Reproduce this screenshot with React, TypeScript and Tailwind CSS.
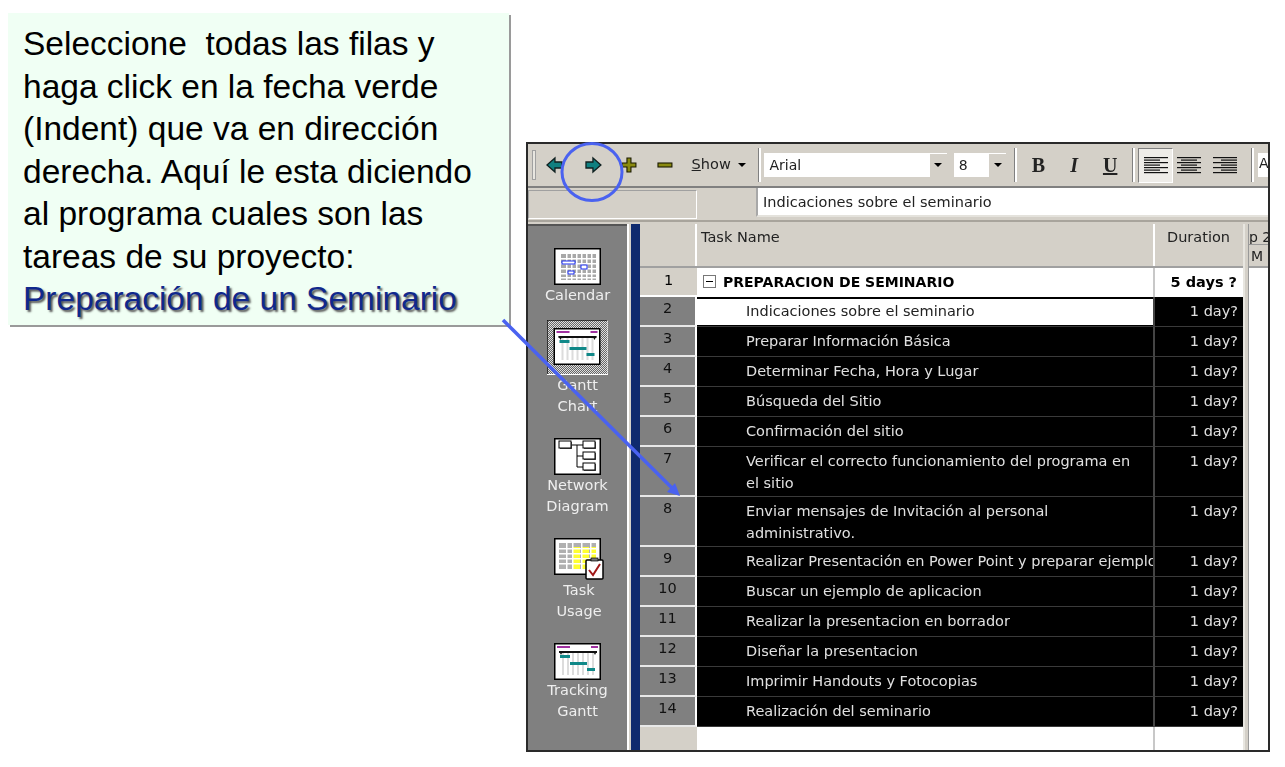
import React from 'react';

const ui = "font-['DejaVu_Sans',sans-serif]";

const rows = [
  { n: 2, h: 'h-[30px]', text: 'Indicaciones sobre el seminario', active: true },
  { n: 3, h: 'h-[30px]', text: 'Preparar Información Básica' },
  { n: 4, h: 'h-[30px]', text: 'Determinar Fecha, Hora y Lugar' },
  { n: 5, h: 'h-[30px]', text: 'Búsqueda del Sitio' },
  { n: 6, h: 'h-[30px]', text: 'Confirmación del sitio' },
  { n: 7, h: 'h-[50px]', text: 'Verificar el correcto funcionamiento del programa en el sitio' },
  { n: 8, h: 'h-[50px]', text: 'Enviar mensajes de Invitación al personal administrativo.' },
  { n: 9, h: 'h-[30px]', text: 'Realizar Presentación en Power Point y preparar ejemplo', clip: true },
  { n: 10, h: 'h-[30px]', text: 'Buscar un ejemplo de aplicacion' },
  { n: 11, h: 'h-[30px]', text: 'Realizar la presentacion en borrador' },
  { n: 12, h: 'h-[30px]', text: 'Diseñar la presentacion' },
  { n: 13, h: 'h-[30px]', text: 'Imprimir Handouts y Fotocopias' },
  { n: 14, h: 'h-[30px]', text: 'Realización del seminario' },
];

const Arrow = ({ flip, className }: { flip?: boolean; className: string }) => (
  <svg width="20" height="20" viewBox="0 0 20 20" className={className}>
    <path
      d={flip ? 'M2 10 L10 3 V7 H17 V13 H10 V17 Z' : 'M18 10 L10 3 V7 H3 V13 H10 V17 Z'}
      fill="#0f8080"
      stroke="#102020"
      strokeWidth="1.3"
    />
  </svg>
);

const Plus = ({ className }: { className: string }) => (
  <svg width="20" height="20" viewBox="0 0 20 20" className={className}>
    <path d="M8 3 H12 V8 H17 V12 H12 V17 H8 V12 H3 V8 H8 Z" fill="#8a8a10" stroke="#1a1a00" strokeWidth="1.1" />
  </svg>
);

const Minus = ({ className }: { className: string }) => (
  <svg width="20" height="20" viewBox="0 0 20 20" className={className}>
    <rect x="3" y="8" width="14" height="4" fill="#8a8a10" stroke="#1a1a00" strokeWidth="1.1" />
  </svg>
);

const Sep = ({ className }: { className: string }) => (
  <div className={`w-[3px] h-[34px] border-l border-l-[#808080] border-r-2 border-r-white ${className}`} />
);

const Combo = ({ w, label }: { w: string; label: string }) => (
  <div className={`${w} h-[24px] bg-white flex items-center justify-between text-[14px] text-[#222]`}>
    <span className="pl-[5px]">{label}</span>
    <div className="w-[17px] h-[23px] bg-[#d4d0c8] flex items-center justify-center">
      <div className="w-0 h-0 border-x-[4px] border-x-transparent border-t-[4px] border-t-black" />
    </div>
  </div>
);

const AlignIcon = ({ mode }: { mode: 'left' | 'center' | 'right' }) => {
  const lines = [24, 16, 24, 16, 24, 16, 24];
  return (
    <svg width="24" height="20" viewBox="0 0 24 20">
      {lines.map((w, i) => {
        const x = mode === 'left' ? 0 : mode === 'right' ? 24 - w : (24 - w) / 2;
        return <rect key={i} x={x} y={2 + i * 2.5} width={w} height="1.2" fill="#111" />;
      })}
    </svg>
  );
};

const CalendarIcon = () => (
  <svg width="47" height="37" viewBox="0 0 47 37">
    <rect x="0.75" y="0.75" width="45.5" height="35.5" fill="#fff" stroke="#000" strokeWidth="1.5" />
    <rect x="7" y="6" width="35" height="26" fill="#a8a8a8" />
    {[12, 17, 22, 27, 32, 37].map((x) => (
      <rect key={x} x={x} y="6" width="1.5" height="26" fill="#fff" />
    ))}
    {[10, 15, 20, 25, 29].map((y) => (
      <rect key={y} x="7" y={y} width="35" height="1.5" fill="#fff" />
    ))}
    <rect x="8" y="13" width="13" height="3" fill="#fff" stroke="#1a2cf0" />
    <rect x="27" y="17" width="6" height="4" fill="#fff" stroke="#1a2cf0" />
    <rect x="14" y="23" width="6" height="3" fill="#fff" stroke="#1a2cf0" />
  </svg>
);

const GanttBody = () => (
  <>
    <rect x="0.75" y="0.75" width="45.5" height="35.5" fill="#fff" stroke="#000" strokeWidth="1.5" />
    {[8, 13, 18, 23, 28, 33, 38].map((x) => (
      <rect key={x} x={x} y="8" width="2" height="24" fill="#dcdcdc" />
    ))}
    <rect x="3" y="3" width="13" height="2" fill="#a030a0" />
    <rect x="37" y="3" width="7" height="2" fill="#a030a0" />
    <rect x="5" y="8" width="38" height="2" fill="#111" />
    <path d="M5 8 h4 l-2 4 z M39 8 h4 l-2 4 z" fill="#111" />
    <rect x="6" y="12" width="10" height="3" fill="#108888" />
    <rect x="16" y="19" width="17" height="3" fill="#108888" />
    <rect x="33" y="25" width="8" height="3" fill="#108888" />
  </>
);

const GanttIcon = ({ selected }: { selected?: boolean }) =>
  selected ? (
    <svg width="61" height="55" viewBox="0 0 61 55">
      <defs>
        <pattern id="hatch" width="2" height="2" patternUnits="userSpaceOnUse">
          <rect width="2" height="2" fill="#e0e0e0" />
          <rect width="1" height="1" fill="#666" />
          <rect x="1" y="1" width="1" height="1" fill="#666" />
        </pattern>
      </defs>
      <rect width="61" height="55" fill="url(#hatch)" />
      <path d="M0 55 V0 H61" fill="none" stroke="#111" strokeWidth="1.5" />
      <path d="M0 54.5 H61 V0" fill="none" stroke="#fff" strokeWidth="1" />
      <g transform="translate(6.5 8)">
        <GanttBody />
      </g>
    </svg>
  ) : (
    <svg width="47" height="37" viewBox="0 0 47 37">
      <GanttBody />
    </svg>
  );

const NetworkIcon = () => (
  <svg width="47" height="37" viewBox="0 0 47 37">
    <rect x="0.75" y="0.75" width="45.5" height="35.5" fill="#fff" stroke="#000" strokeWidth="1.5" />
    <path d="M17 7 H29 M23 7 V29 M23 18 H29 M23 29 H29" stroke="#000" strokeWidth="1" fill="none" />
    {[
      [5, 3, 12, 7],
      [29, 3, 12, 7],
      [29, 14, 12, 7],
      [29, 25, 12, 7],
    ].map(([x, y, w, h]) => (
      <g key={`${x}-${y}`}>
        <rect x={x + 1} y={y + 1} width={w} height={h} fill="#555" />
        <rect x={x} y={y} width={w} height={h} fill="#fff" stroke="#000" />
      </g>
    ))}
  </svg>
);

const TaskIcon = () => (
  <svg width="51" height="42" viewBox="0 0 51 42">
    <rect x="0.75" y="0.75" width="45.5" height="35.5" fill="#fff" stroke="#000" strokeWidth="1.5" />
    <rect x="5" y="5" width="37" height="26" fill="#b0b0b0" />
    <rect x="19" y="9" width="7" height="22" fill="#ffff30" />
    <rect x="28" y="9" width="7" height="22" fill="#ffff30" />
    <rect x="37" y="9" width="5" height="22" fill="#ffff30" />
    {[10, 15, 20, 25].map((y) => (
      <rect key={y} x="5" y={y} width="37" height="1.5" fill="#fff" />
    ))}
    {[12, 18, 27, 36].map((x) => (
      <rect key={x} x={x} y="5" width="1.5" height="26" fill="#fff" />
    ))}
    <rect x="32" y="22" width="17" height="19" rx="1" fill="#fff" stroke="#000" strokeWidth="1.5" />
    <rect x="37" y="20" width="7" height="3" fill="#777" stroke="#000" strokeWidth="0.7" />
    <path d="M35 32 L39 37 L46 26" fill="none" stroke="#a01818" strokeWidth="2" />
  </svg>
);

const NavItem = ({ icon, label, className }: { icon: React.ReactNode; label: string[]; className: string }) => (
  <div className={`flex flex-col items-center shrink-0 ${className}`}>
    {icon}
    <div className="text-center text-[14.5px] leading-[21.5px] text-[#eeeeee]">
      {label.map((l) => (
        <div key={l}>{l}</div>
      ))}
    </div>
  </div>
);

export default function App() {
  return (
    <div className="relative w-[1285px] h-[767px] bg-white overflow-hidden flex items-start">
      <div className="ml-[8px] mt-[13px] w-[501px] h-[312px] shrink-0 bg-[#f0fff4] shadow-[2px_2px_0_#9a9a9a] pl-[15px] pt-[10px] font-['Liberation_Sans',sans-serif] text-[33.5px] leading-[42.5px] text-black whitespace-pre">
        <div>Seleccione  todas las filas y</div>
        <div>haga click en la fecha verde</div>
        <div>(Indent) que va en dirección</div>
        <div>derecha. Aquí le esta diciendo</div>
        <div>al programa cuales son las</div>
        <div>tareas de su proyecto:</div>
        <div className="text-[#10288c] [text-shadow:2px_2px_2px_#555]">Preparación de un Seminario</div>
      </div>

      <div className={`ml-[17px] mt-[142px] w-[744px] h-[610px] shrink-0 border-2 border-[#2a2a2a] bg-[#d4d0c8] overflow-hidden flex flex-col blur-[0.35px] ${ui}`}>
        {/* toolbar */}
        <div className="h-[44px] shrink-0 flex items-center border-b-2 border-b-[#808080] text-[#222]">
          <div className="ml-[4px] w-[4px] h-[30px] bg-[#e8e6e0] border border-[#a0a0a0]" />
          <Arrow flip className="ml-[9px]" />
          <Arrow className="ml-[18px]" />
          <Plus className="ml-[16px]" />
          <Minus className="ml-[16px]" />
          <span className="ml-[17px] text-[14.5px] w-[44px]">
            <span className="underline">S</span>how
          </span>
          <div className="ml-[3px] w-0 h-0 border-x-[4px] border-x-transparent border-t-[4px] border-t-black" />
          <Sep className="ml-[12px]" />
          <Combo w="w-[183px] ml-[3px]" label="Arial" />
          <Combo w="w-[53px] ml-[7px]" label="8" />
          <Sep className="ml-[8px]" />
          <span className="ml-[11px] w-[20px] text-center font-['Liberation_Serif',serif] font-bold text-[20px]">B</span>
          <span className="ml-[16px] w-[20px] text-center font-['Liberation_Serif',serif] font-bold italic text-[20px]">I</span>
          <span className="ml-[16px] w-[20px] text-center font-['Liberation_Serif',serif] font-bold underline text-[20px]">U</span>
          <Sep className="ml-[12px]" />
          <div className="ml-[3px] w-[35px] h-[35px] bg-[#eeece8] border-t border-l border-t-[#808080] border-l-[#808080] border-b border-r border-b-white border-r-white flex items-center justify-center">
            <AlignIcon mode="left" />
          </div>
          <div className="ml-[4px]">
            <AlignIcon mode="center" />
          </div>
          <div className="ml-[12px]">
            <AlignIcon mode="right" />
          </div>
          <Sep className="ml-[14px]" />
          <div className="ml-[4px] w-[10px] h-[24px] bg-white text-[14px] pl-[1px] overflow-hidden">A</div>
        </div>

        {/* entry bar */}
        <div className="h-[34px] shrink-0 flex items-start border-b-2 border-b-[#a8a49c]">
          <div className="mt-[2px] w-[169px] h-[29px] border border-[#a0a0a0] border-r-white border-b-white" />
          <div className="ml-[59px] flex-1 h-[29px] bg-white border-l-2 border-l-[#a8a8a8] border-b-2 border-b-[#e4e2dc] pl-[5px] text-[14.5px] leading-[28px] text-[#222]">
            Indicaciones sobre el seminario
          </div>
        </div>

        {/* main */}
        <div className="flex-1 flex mt-[2px] min-h-0">
          <div className="w-[99px] shrink-0 bg-[#808080] border-t-2 border-t-[#555] overflow-hidden flex flex-col">
            <NavItem className="mt-[22px]" icon={<CalendarIcon />} label={['Calendar']} />
            <NavItem className="mt-[13px]" icon={<GanttIcon selected />} label={['Gantt', 'Chart']} />
            <NavItem className="mt-[20px]" icon={<NetworkIcon />} label={['Network', 'Diagram']} />
            <NavItem className="mt-[20px] pl-[3px]" icon={<TaskIcon />} label={['Task', 'Usage']} />
            <NavItem className="mt-[20px]" icon={<GanttIcon />} label={['Tracking', 'Gantt']} />
          </div>
          <div className="w-[4px] shrink-0 border-l-2 border-l-white bg-[#d4d0c8]" />
          <div className="w-[9px] shrink-0 bg-[#0f2a6e]" />

          <div className="w-[603px] shrink-0 flex flex-col">
            <div className="h-[44px] shrink-0 flex border-b-2 border-b-[#a0a0a0] text-[14.5px] text-[#222]">
              <div className="w-[57px] border-r-2 border-r-white" />
              <div className="w-[458px] pl-[4px] pt-[3px] border-r-2 border-r-white">Task Name</div>
              <div className="flex-1 pl-[12px] pt-[3px]">Duration</div>
            </div>

            <div className="h-[29px] shrink-0 flex bg-white text-[14.5px] text-black">
              <div className="w-[57px] bg-[#d4d0c8] text-center pt-[1px] leading-[22px] border-b-2 border-b-white">1</div>
              <div className="w-[458px] flex items-start pt-[3px] leading-[22px] border-r-2 border-r-[#c8c8c8] font-bold">
                <div className="ml-[6px] mt-[4px] w-[13px] h-[13px] border border-[#777] flex items-center justify-center">
                  <div className="w-[7px] h-px bg-black" />
                </div>
                <span className="ml-[7px] text-[14px]">PREPARACION DE SEMINARIO</span>
              </div>
              <div className="flex-1 text-right pr-[6px] pt-[3px] leading-[22px] font-bold">5 days ?</div>
            </div>

            {rows.map((r) => (
              <div key={r.n} className={`${r.h} shrink-0 flex text-[14.5px] leading-[22px]`}>
                <div className="w-[57px] shrink-0 bg-[#808080] text-[#111] text-center border-b-2 border-b-[#e8e8e8] border-r-2 border-r-white">
                  {r.n}
                </div>
                <div className="w-[458px] shrink-0 bg-black border-b border-b-[#3a3a3a] border-r-2 border-r-[#444]">
                  {r.active ? (
                    <div className="mt-[2px] h-[26px] bg-white text-[#222] pl-[49px] pt-[1px]">{r.text}</div>
                  ) : (
                    <div className={`pl-[49px] pr-[6px] pt-[3px] text-[#e0e0e0] ${r.clip ? 'whitespace-nowrap overflow-hidden pr-0' : ''}`}>
                      {r.text}
                    </div>
                  )}
                </div>
                <div className="flex-1 bg-black border-b border-b-[#3a3a3a] text-[#e0e0e0] text-right pr-[5px] pt-[3px]">
                  1 day?
                </div>
              </div>
            ))}

            <div className="flex-1 flex bg-white">
              <div className="w-[57px] bg-[#d4d0c8]" />
              <div className="w-[458px] border-r-2 border-r-[#c8c8c8]" />
            </div>
          </div>

          <div className="w-[6px] shrink-0 bg-[#d4d0c8] border-l-2 border-l-[#e8e6e0] border-r border-r-[#999]" />
          <div className="flex-1 min-w-0 flex flex-col bg-white overflow-hidden text-[14px] text-[#222]">
            <div className="h-[20px] shrink-0 bg-[#d4d0c8] whitespace-nowrap leading-[26px] overflow-hidden">p 2</div>
            <div className="h-[24px] shrink-0 bg-[#d4d0c8] border-t border-t-[#999] border-b-2 border-b-[#a0a0a0] leading-[22px] pl-[2px]">M</div>
          </div>
        </div>
      </div>

      <svg width="1285" height="767" viewBox="0 0 1285 767" className="absolute left-0 top-0 pointer-events-none">
        <ellipse cx="592" cy="172" rx="30" ry="28.5" fill="none" stroke="#4a62f0" strokeWidth="3" />
        <path d="M503 320 L674 490" stroke="#4a62f0" strokeWidth="3.5" fill="none" />
        <path d="M680 496 L667 492 L675 483 Z" fill="#4a62f0" />
      </svg>
    </div>
  );
}
